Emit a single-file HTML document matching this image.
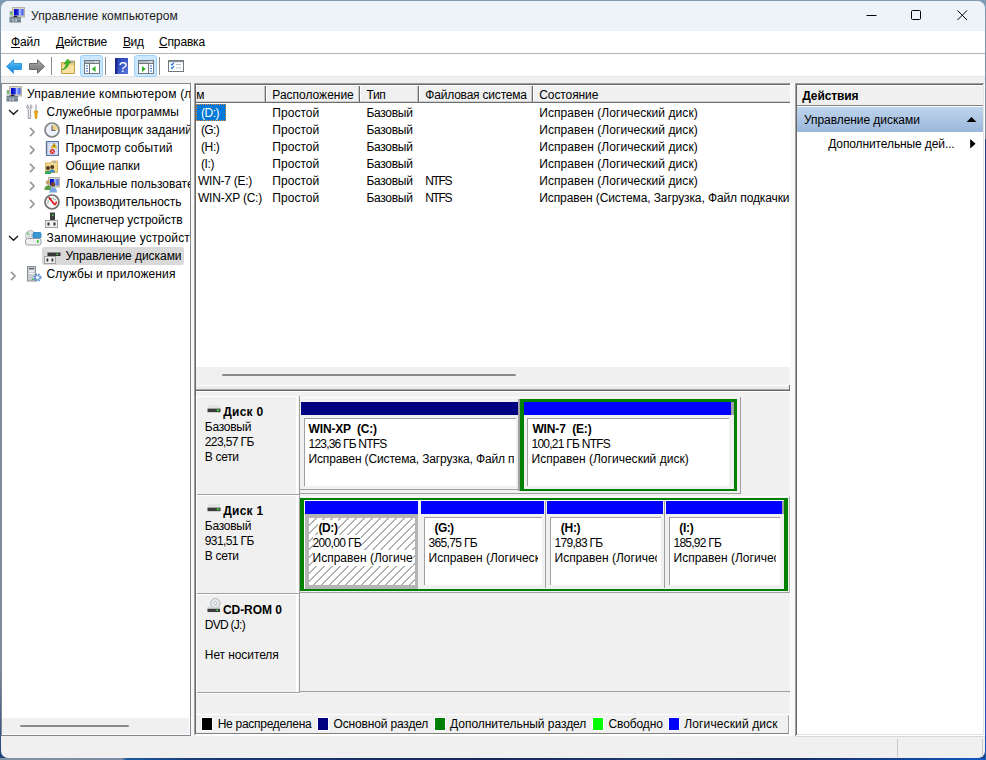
<!DOCTYPE html>
<html lang="ru"><head><meta charset="utf-8"><title>Управление компьютером</title>
<style>
html,body{margin:0;padding:0;}
body{width:986px;height:760px;overflow:hidden;background:#1b3f7a;font-family:"Liberation Sans", sans-serif;font-size:12px;color:#000;}
#w{position:absolute;left:0;top:0;width:986px;height:760px;overflow:hidden;}
#w div,#w span.t,#w svg{position:absolute;}
span.t{white-space:pre;line-height:16px;height:16px;}
u{text-decoration:underline;text-underline-offset:1px;text-decoration-skip-ink:none;}
</style></head><body><div id="w">
<div style="left:0;top:0;width:986px;height:760px;background:linear-gradient(180deg,#7f9bb3 0%,#7b8c9e 12%,#7b8c9e 88%,#1d3f78 100%);"></div>
<div style="left:985px;top:0;width:1px;height:760px;background:linear-gradient(180deg,#7f9bb3 0,#7a8ca2 18.2%,#1c3c88 18.4%,#1a3a80 70%,#1058c0 100%);"></div>
<div style="left:0;top:758px;width:986px;height:2px;background:linear-gradient(90deg,#8090a6 0,#7c8ca4 12.4%,#1c5c98 12.8%,#1a3a78 20%,#182858 50%,#203c70 65%,#182c60 80%,#1058c0 100%);"></div>
<div style="left:1px;top:1px;width:984px;height:757px;background:#f0f0f0;border-radius:8px 8px 7px 7px;overflow:hidden;">
</div>
<div style="left:1px;top:1px;width:984px;height:30px;background:#eef3f9;border-radius:8px 8px 0 0;"></div>
<div style="left:1px;top:31px;width:984px;height:45px;background:#fff;"></div>
<div style="left:1px;top:53px;width:984px;height:1px;background:#b4b4b4;"></div>
<div style="left:1px;top:76px;width:984px;height:1px;background:#e3e3e3;"></div>
<svg style="left:9px;top:7px" width="17" height="16" viewBox="0 0 17 16"><rect x="3.5" y="0.5" width="12" height="9.5" fill="#d8d4c4" stroke="#b8b4a4" stroke-width="1"/><defs><linearGradient id="scr" x1="0" y1="0" x2="1" y2="0"><stop offset="0" stop-color="#0000c8"/><stop offset="0.45" stop-color="#2030d8"/><stop offset="0.55" stop-color="#b8c8ff"/><stop offset="1" stop-color="#2848e8"/></linearGradient></defs><rect x="5" y="2" width="9.5" height="6.5" fill="url(#scr)"/><rect x="0.5" y="4" width="2.5" height="6" fill="#c8c8d0"/><rect x="1" y="6" width="2" height="1.5" fill="#30e030"/><rect x="1.5" y="4.5" width="1" height="1.2" fill="#404050"/><path d="M4 10 Q6.5 7.5 9 10 Z" fill="#202020"/><rect x="0.5" y="10" width="11.5" height="5.5" fill="#70808c"/><rect x="0.5" y="11.5" width="11.5" height="1" fill="#9aa8b2"/><rect x="3.5" y="12.5" width="1.2" height="2" fill="#e8e8f0"/><rect x="6.5" y="12.5" width="1.2" height="2" fill="#e8e8f0"/></svg>
<span class="t" id="t0" style="left:31px;top:8px;color:#1a1a1a;letter-spacing:0.055px;">Управление компьютером</span>
<svg style="left:860px;top:1px" width="124" height="30" viewBox="0 0 124 30" fill="none" stroke="#000" stroke-width="1"><path d="M6.5 14.5 H16.5"/><rect x="51.5" y="9.5" width="9" height="9" rx="1"/><path d="M97.5 9.5 L107 19 M107 9.5 L97.5 19"/></svg>
<span class="t" id="t1" style="left:11px;top:34px;letter-spacing:-0.179px;"><u>Ф</u>айл</span>
<span class="t" id="t2" style="left:56px;top:34px;letter-spacing:-0.221px;"><u>Д</u>ействие</span>
<span class="t" id="t3" style="left:123px;top:34px;letter-spacing:-0.411px;"><u>В</u>ид</span>
<span class="t" id="t4" style="left:159px;top:34px;letter-spacing:-0.156px;"><u>С</u>правка</span>
<svg style="left:5px;top:58px" width="18" height="17" viewBox="0 0 18 17"><defs><linearGradient id="ba" x1="0" y1="0" x2="0" y2="1"><stop offset="0" stop-color="#7fd0f8"/><stop offset="0.5" stop-color="#2ea0e8"/><stop offset="1" stop-color="#1c7fd0"/></linearGradient><linearGradient id="fa" x1="0" y1="0" x2="0" y2="1"><stop offset="0" stop-color="#b8b8b8"/><stop offset="0.5" stop-color="#8c8c8c"/><stop offset="1" stop-color="#787878"/></linearGradient></defs><path d="M1.5 8.5 L8.5 1.8 V5.5 H16.5 V11.5 H8.5 V15.2 Z" fill="url(#ba)" stroke="#3a9be0" stroke-width="1" stroke-linejoin="round"/></svg>
<svg style="left:28px;top:58px" width="18" height="17" viewBox="0 0 18 17"><path d="M16.5 8.5 L9.5 1.8 V5.5 H1.5 V11.5 H9.5 V15.2 Z" fill="url(#fa)" stroke="#6a6a6a" stroke-width="1" stroke-linejoin="round"/></svg>
<div style="left:51px;top:57px;width:1px;height:18px;background:#8a8a8a;"></div>
<div style="left:105px;top:57px;width:1px;height:18px;background:#8a8a8a;"></div>
<div style="left:159px;top:57px;width:1px;height:18px;background:#8a8a8a;"></div>
<svg style="left:60px;top:58px" width="16" height="17" viewBox="0 0 16 17"><path d="M1.5 4.5 H8 L9 3 H14.5 V15.5 H1.5 Z" fill="#ecc878" stroke="#c8a048" stroke-width="1"/><rect x="2" y="7" width="12" height="8" fill="#f6e0a0"/><rect x="10.5" y="3.4" width="3" height="1.2" fill="#5a9cf0"/><path d="M1.8 11.8 C4.6 10.6 6 8.2 6.2 5.4 L4.2 5.8 L7.6 1 L10.8 5 L8.8 5 C8.6 8.6 6.2 11.2 1.8 11.8 Z" fill="#3cb828" stroke="#2a9818" stroke-width="0.6"/></svg>
<div style="left:80px;top:55px;width:23px;height:22px;background:#cce8ff;border:1px solid #99d1ff;border-radius:3px;box-sizing:border-box;"></div>
<div style="left:134px;top:55px;width:23px;height:22px;background:#cce8ff;border:1px solid #99d1ff;border-radius:3px;box-sizing:border-box;"></div>
<svg style="left:84px;top:60px" width="16" height="14" viewBox="0 0 16 14"><rect x="0.5" y="0.5" width="15" height="13" fill="#fff" stroke="#707880"/><rect x="1" y="1" width="14" height="2" fill="#b8bcc4"/><rect x="1" y="3" width="14" height="1" fill="#707880"/><rect x="11" y="1.3" width="1.2" height="1.2" fill="#fff"/><rect x="13" y="1.3" width="1.2" height="1.2" fill="#fff"/><rect x="5" y="4" width="1" height="9" fill="#707880"/><rect x="2" y="5.5" width="2" height="1" fill="#3a70d8"/><rect x="2" y="8" width="2" height="1" fill="#3a70d8"/><rect x="2" y="10.5" width="2" height="1" fill="#3a70d8"/><path d="M11.5 6 V12 L7.8 9 Z" fill="#2cb020"/></svg>
<svg style="left:115px;top:58px" width="13" height="16" viewBox="0 0 13 16"><defs><linearGradient id="hb" x1="0" y1="0" x2="1" y2="1"><stop offset="0" stop-color="#2038b0"/><stop offset="1" stop-color="#5878e0"/></linearGradient></defs><rect x="0" y="0" width="13" height="16" fill="url(#hb)"/><rect x="0" y="0" width="2.5" height="16" fill="#1a2c90"/><text x="7.8" y="13.6" font-family="Liberation Sans, sans-serif" font-size="15" fill="#fff" text-anchor="middle">?</text></svg>
<svg style="left:138px;top:60px" width="16" height="14" viewBox="0 0 16 14"><rect x="0.5" y="0.5" width="15" height="13" fill="#fff" stroke="#707880"/><rect x="1" y="1" width="14" height="2" fill="#b8bcc4"/><rect x="1" y="3" width="14" height="1" fill="#707880"/><rect x="11" y="1.3" width="1.2" height="1.2" fill="#fff"/><rect x="13" y="1.3" width="1.2" height="1.2" fill="#fff"/><rect x="10" y="4" width="1" height="9" fill="#707880"/><rect x="12" y="5.5" width="2" height="1" fill="#3a70d8"/><rect x="12" y="8" width="2" height="1" fill="#3a70d8"/><rect x="12" y="10.5" width="2" height="1" fill="#3a70d8"/><path d="M4 6 V12 L7.7 9 Z" fill="#2cb020"/></svg>
<svg style="left:168px;top:60px" width="16" height="12" viewBox="0 0 16 12"><rect x="0.5" y="0.5" width="15" height="11" fill="#fff" stroke="#707880"/><rect x="1" y="1" width="14" height="1.2" fill="#8a9098"/><path d="M3 3.8 L4 5 L6 2.6 M3 7.3 L4 8.5 L6 6.1" fill="none" stroke="#2a78e0" stroke-width="1.2"/><rect x="8" y="4" width="5" height="0.8" fill="#b0b0b0"/><rect x="8" y="7.5" width="5" height="0.8" fill="#b0b0b0"/></svg>
<div style="left:1px;top:83px;width:190px;height:653px;background:#fff;border:1px solid #828790;box-sizing:border-box;"></div>
<div style="left:2px;top:718px;width:187px;height:16px;background:#f0f0f0;"></div>
<div style="left:20px;top:725px;width:109px;height:2px;background:#8a8a8a;border-radius:1px;"></div>
<div style="left:42px;top:247px;width:142px;height:18px;background:#d9d9d9;border-radius:2px;"></div>
<svg style="left:6px;top:86px" width="17" height="16" viewBox="0 0 17 16"><rect x="3.5" y="0.5" width="12" height="9.5" fill="#d8d4c4" stroke="#b8b4a4" stroke-width="1"/><defs><linearGradient id="scr" x1="0" y1="0" x2="1" y2="0"><stop offset="0" stop-color="#0000c8"/><stop offset="0.45" stop-color="#2030d8"/><stop offset="0.55" stop-color="#b8c8ff"/><stop offset="1" stop-color="#2848e8"/></linearGradient></defs><rect x="5" y="2" width="9.5" height="6.5" fill="url(#scr)"/><rect x="0.5" y="4" width="2.5" height="6" fill="#c8c8d0"/><rect x="1" y="6" width="2" height="1.5" fill="#30e030"/><rect x="1.5" y="4.5" width="1" height="1.2" fill="#404050"/><path d="M4 10 Q6.5 7.5 9 10 Z" fill="#202020"/><rect x="0.5" y="10" width="11.5" height="5.5" fill="#70808c"/><rect x="0.5" y="11.5" width="11.5" height="1" fill="#9aa8b2"/><rect x="3.5" y="12.5" width="1.2" height="2" fill="#e8e8f0"/><rect x="6.5" y="12.5" width="1.2" height="2" fill="#e8e8f0"/></svg>
<span class="t" id="t5" style="left:27px;top:86px;letter-spacing:0.188px;width:163px;overflow:hidden;">Управление компьютером (л</span>
<svg style="left:8px;top:109.4px" width="11" height="7" viewBox="0 0 11 7"><path d="M1 1 L5.5 5.3 L10 1" fill="none" stroke="#1a1a1a" stroke-width="1.4"/></svg>
<svg style="left:26px;top:104px" width="14" height="16" viewBox="0 0 14 16"><path d="M2 0.8 C0.6 1.6 0.4 3.6 1.6 4.8 L2.2 5.4 V14.5 H4.6 V5.4 L5.2 4.8 C6.4 3.6 6.2 1.6 4.8 0.8 V3.2 L3.4 4 L2 3.2 Z" fill="#e8e8ec" stroke="#8a8c94" stroke-width="0.8"/><rect x="9.5" y="0.5" width="1" height="6.5" fill="#9098a0"/><path d="M8.3 7 H11.7 V9 L11 9.6 V14 Q10 15.4 9 14 V9.6 L8.3 9 Z" fill="#f0b010" stroke="#c88a00" stroke-width="0.6"/></svg>
<span class="t" id="t6" style="left:46.5px;top:104px;letter-spacing:0.068px;">Служебные программы</span>
<svg style="left:29.2px;top:127px" width="7" height="10" viewBox="0 0 7 10"><path d="M1 0.9 L5.1 5 L1 9.1" fill="none" stroke="#929292" stroke-width="1.5"/></svg>
<svg style="left:29.2px;top:145px" width="7" height="10" viewBox="0 0 7 10"><path d="M1 0.9 L5.1 5 L1 9.1" fill="none" stroke="#929292" stroke-width="1.5"/></svg>
<svg style="left:29.2px;top:163px" width="7" height="10" viewBox="0 0 7 10"><path d="M1 0.9 L5.1 5 L1 9.1" fill="none" stroke="#929292" stroke-width="1.5"/></svg>
<svg style="left:29.2px;top:181px" width="7" height="10" viewBox="0 0 7 10"><path d="M1 0.9 L5.1 5 L1 9.1" fill="none" stroke="#929292" stroke-width="1.5"/></svg>
<svg style="left:29.2px;top:199px" width="7" height="10" viewBox="0 0 7 10"><path d="M1 0.9 L5.1 5 L1 9.1" fill="none" stroke="#929292" stroke-width="1.5"/></svg>
<svg style="left:44px;top:122px" width="16" height="16" viewBox="0 0 16 16"><circle cx="8" cy="8" r="7" fill="#eef2f8" stroke="#808488" stroke-width="1.7"/><path d="M8 8 V2.2 A5.8 5.8 0 0 1 13.8 8 Z" fill="#f0d088"/><path d="M8 3.5 V8.5 H11.5" fill="none" stroke="#5a6470" stroke-width="1.1"/></svg>
<span class="t" id="t7" style="left:65.5px;top:122px;width:124.5px;overflow:hidden;">Планировщик заданий</span>
<svg style="left:45px;top:141px" width="14" height="15" viewBox="0 0 14 15"><rect x="1.5" y="0.5" width="12" height="14" fill="#c8d8f4" stroke="#5870a8" stroke-width="1"/><path d="M3 3.5 H13 M3 5.5 H13 M3 7.5 H13 M3 9.5 H13 M3 11.5 H13" stroke="#eaf0fc" stroke-width="0.8"/><path d="M0.5 2 H2.5 M0.5 4 H2.5 M0.5 6 H2.5 M0.5 8 H2.5 M0.5 10 H2.5 M0.5 12 H2.5" stroke="#707478" stroke-width="0.8"/><path d="M9 2 L12 7 H6 Z" fill="#f8d020" stroke="#b89000" stroke-width="0.5"/><rect x="8.6" y="3.8" width="0.9" height="2" fill="#202020"/><circle cx="7.3" cy="10.5" r="2.5" fill="#e02828"/><path d="M6.3 9.5 L8.3 11.5 M8.3 9.5 L6.3 11.5" stroke="#fff" stroke-width="0.8"/></svg>
<span class="t" id="t8" style="left:65.5px;top:140px;letter-spacing:0.103px;">Просмотр событий</span>
<svg style="left:44px;top:160px" width="15" height="15" viewBox="0 0 15 15"><path d="M1.5 3 H7 L8 1 H13.5 V12.5 H1.5 Z" fill="#f4d88c" stroke="#d0a848" stroke-width="0.8"/><rect x="9" y="1.6" width="3" height="1" fill="#6aa0e8"/><circle cx="4" cy="8" r="2" fill="#503828"/><path d="M0.8 14 Q0.8 10.5 4 10.5 Q7.2 10.5 7.2 14 Z" fill="#38a858"/><circle cx="8.2" cy="7" r="2" fill="#503828"/><path d="M5.4 12.6 Q5.4 9.5 8.2 9.5 Q11 9.5 11 12.6 Z" fill="#3888c8"/></svg>
<span class="t" id="t9" style="left:65.5px;top:158px;letter-spacing:0.007px;">Общие папки</span>
<svg style="left:44px;top:176.5px" width="16" height="16" viewBox="0 0 16 16"><rect x="4.5" y="0.5" width="11" height="9.5" fill="#d8d4c4" stroke="#b8b4a4"/><rect x="6" y="2" width="8.5" height="6.5" fill="url(#scr)"/><circle cx="4" cy="5.5" r="2.2" fill="#c8a070"/><path d="M0.4 13 Q0.4 8.5 4 8.5 Q7.6 8.5 7.6 13 Z" fill="#58a048"/><circle cx="9" cy="7.5" r="2.3" fill="#704828"/><path d="M5.4 15.5 Q5.4 10.5 9 10.5 Q13 10.5 13 15.5 Z" fill="#78a8e0"/></svg>
<span class="t" id="t10" style="left:65.5px;top:176px;width:124.5px;overflow:hidden;">Локальные пользовате</span>
<svg style="left:44px;top:194px" width="16" height="16" viewBox="0 0 16 16"><circle cx="8" cy="8" r="7" fill="#fbfbfb" stroke="#707070" stroke-width="1.7"/><path d="M4 9.5 A4.2 4.2 0 0 1 12 7" fill="none" stroke="#508060" stroke-width="1.2" stroke-dasharray="1 1"/><path d="M12.5 7.5 A4.5 4.5 0 0 1 10.5 11" fill="none" stroke="#e01818" stroke-width="1.6"/><path d="M4.8 3.2 L10.5 10.5" stroke="#e01020" stroke-width="1.8"/></svg>
<span class="t" id="t11" style="left:65.5px;top:194px;letter-spacing:-0.027px;">Производительность</span>
<svg style="left:45px;top:212px" width="13" height="16" viewBox="0 0 13 16"><rect x="5" y="0.5" width="5" height="8" fill="#404040"/><rect x="7" y="2.5" width="1.5" height="1.5" fill="#40e040"/><rect x="0.5" y="8.5" width="12" height="7" fill="#f0f0f0" stroke="#a0a0a0"/><rect x="2.5" y="10.5" width="2" height="3" fill="#303030"/><rect x="8.5" y="10.5" width="2" height="3" fill="#303030"/></svg>
<span class="t" id="t12" style="left:65.5px;top:212px;letter-spacing:-0.017px;">Диспетчер устройств</span>
<svg style="left:8px;top:235.4px" width="11" height="7" viewBox="0 0 11 7"><path d="M1 1 L5.5 5.3 L10 1" fill="none" stroke="#1a1a1a" stroke-width="1.4"/></svg>
<svg style="left:25px;top:230px" width="17" height="16" viewBox="0 0 17 16"><circle cx="5.5" cy="5.5" r="5" fill="#e4e6ea" stroke="#a8acb0" stroke-width="0.8"/><circle cx="5.5" cy="5.5" r="1.3" fill="#fff" stroke="#909498" stroke-width="0.6"/><rect x="2" y="2.5" width="1.5" height="2" fill="#40c040"/><rect x="8" y="2.5" width="8" height="5.5" rx="1" fill="#3898d8" stroke="#2878b8" stroke-width="0.8"/><rect x="0.5" y="8.5" width="15.5" height="6.5" rx="2" fill="#f0f0f2" stroke="#909498" stroke-width="0.9"/><rect x="12" y="10" width="1.6" height="3" fill="#38c838"/></svg>
<span class="t" id="t13" style="left:46.5px;top:230px;letter-spacing:0.174px;width:143.5px;overflow:hidden;">Запоминающие устройст</span>
<svg style="left:44px;top:249px" width="17" height="15" viewBox="0 0 17 15"><rect x="4" y="0.5" width="12" height="3" fill="#e0e2e6"/><rect x="3.5" y="3.5" width="13" height="3.5" fill="#383838"/><rect x="12.5" y="4.5" width="1.5" height="1.5" fill="#40e040"/><rect x="0.5" y="7.5" width="11" height="7" fill="#f0f0f0" stroke="#a0a0a0"/><rect x="2.5" y="9.5" width="1.8" height="3" fill="#303030"/><rect x="7.5" y="9.5" width="1.8" height="3" fill="#303030"/></svg>
<span class="t" id="t14" style="left:65.5px;top:248px;letter-spacing:-0.049px;">Управление дисками</span>
<svg style="left:10.2px;top:271px" width="7" height="10" viewBox="0 0 7 10"><path d="M1 0.9 L5.1 5 L1 9.1" fill="none" stroke="#929292" stroke-width="1.5"/></svg>
<svg style="left:27px;top:266px" width="15" height="16" viewBox="0 0 15 16"><rect x="0.5" y="0.5" width="8" height="14.5" fill="#c8ccd2" stroke="#8a9098"/><rect x="2" y="2" width="5" height="1.2" fill="#585c64"/><rect x="2" y="4.5" width="5" height="1.2" fill="#fff"/><rect x="2" y="7" width="5" height="1" fill="#fff"/><rect x="5" y="12.5" width="1.6" height="1.4" fill="#38c838"/><circle cx="10.5" cy="11.5" r="3" fill="none" stroke="#5890d0" stroke-width="2.2" stroke-dasharray="1.4 1"/><circle cx="10.5" cy="11.5" r="2.2" fill="#e8f0fc" stroke="#5890d0" stroke-width="0.9"/></svg>
<span class="t" id="t15" style="left:46.5px;top:266px;letter-spacing:0.109px;">Службы и приложения</span>
<div style="left:191px;top:83px;width:3px;height:653px;background:#f8f8f8;"></div>
<div style="left:791px;top:83px;width:4px;height:653px;background:#f8f8f8;"></div>
<div style="left:194px;top:83px;width:597px;height:653px;background:#f0f0f0;"></div>
<div style="left:194px;top:83px;width:597px;height:1px;background:#a0a0a0;"></div>
<div style="left:194px;top:83px;width:1px;height:652px;background:#a0a0a0;"></div>
<div style="left:195px;top:84px;width:595px;height:1px;background:#696969;"></div>
<div style="left:195px;top:84px;width:1px;height:650px;background:#696969;"></div>
<div style="left:790px;top:83px;width:1px;height:653px;background:#fff;"></div>
<div style="left:196px;top:85px;width:594px;height:282px;background:#fff;"></div>
<div style="left:196px;top:85px;width:594px;height:18px;background:#f0f0f0;"></div>
<div style="left:196px;top:85px;width:594px;height:1px;background:#fff;"></div>
<div style="left:196px;top:101px;width:594px;height:1px;background:#d0d0d0;"></div>
<div style="left:196px;top:102px;width:594px;height:1px;background:#6e6e6e;"></div>
<div style="left:264px;top:86px;width:1px;height:15px;background:#c4c4c4;"></div>
<div style="left:265px;top:86px;width:1px;height:16px;background:#6e6e6e;"></div>
<div style="left:266px;top:86px;width:1px;height:15px;background:#fff;"></div>
<div style="left:358px;top:86px;width:1px;height:15px;background:#c4c4c4;"></div>
<div style="left:359px;top:86px;width:1px;height:16px;background:#6e6e6e;"></div>
<div style="left:360px;top:86px;width:1px;height:15px;background:#fff;"></div>
<div style="left:417px;top:86px;width:1px;height:15px;background:#c4c4c4;"></div>
<div style="left:418px;top:86px;width:1px;height:16px;background:#6e6e6e;"></div>
<div style="left:419px;top:86px;width:1px;height:15px;background:#fff;"></div>
<div style="left:531px;top:86px;width:1px;height:15px;background:#c4c4c4;"></div>
<div style="left:532px;top:86px;width:1px;height:16px;background:#6e6e6e;"></div>
<div style="left:533px;top:86px;width:1px;height:15px;background:#fff;"></div>
<span class="t" id="t16" style="left:189.6px;top:87px;clip-path:inset(0 0 0 6.4px);">ом</span>
<span class="t" id="t17" style="left:272.3px;top:87px;letter-spacing:-0.007px;">Расположение</span>
<span class="t" id="t18" style="left:366.4px;top:87px;letter-spacing:-0.272px;">Тип</span>
<span class="t" id="t19" style="left:425.3px;top:87px;letter-spacing:-0.201px;">Файловая система</span>
<span class="t" id="t20" style="left:539.3px;top:87px;letter-spacing:-0.099px;">Состояние</span>
<div style="left:196px;top:104px;width:30px;height:17px;background:#0078d7;outline:1px dotted #e08a3c;outline-offset:-1px;"></div>
<span class="t" id="t21" style="left:201px;top:104.5px;color:#fff;letter-spacing:-0.500px;">(D:)</span>
<span class="t" id="t22" style="left:272.3px;top:104.5px;letter-spacing:0.040px;">Простой</span>
<span class="t" id="t23" style="left:366.4px;top:104.5px;letter-spacing:-0.282px;">Базовый</span>
<span class="t" id="t24" style="left:539.3px;top:104.5px;letter-spacing:0.064px;">Исправен (Логический диск)</span>
<span class="t" id="t25" style="left:201px;top:121.5px;letter-spacing:-0.668px;">(G:)</span>
<span class="t" id="t26" style="left:272.3px;top:121.5px;letter-spacing:0.040px;">Простой</span>
<span class="t" id="t27" style="left:366.4px;top:121.5px;letter-spacing:-0.282px;">Базовый</span>
<span class="t" id="t28" style="left:539.3px;top:121.5px;letter-spacing:0.064px;">Исправен (Логический диск)</span>
<span class="t" id="t29" style="left:201px;top:138.5px;letter-spacing:-0.375px;">(H:)</span>
<span class="t" id="t30" style="left:272.3px;top:138.5px;letter-spacing:0.040px;">Простой</span>
<span class="t" id="t31" style="left:366.4px;top:138.5px;letter-spacing:-0.282px;">Базовый</span>
<span class="t" id="t32" style="left:539.3px;top:138.5px;letter-spacing:0.064px;">Исправен (Логический диск)</span>
<span class="t" id="t33" style="left:201px;top:155.5px;letter-spacing:-0.418px;">(I:)</span>
<span class="t" id="t34" style="left:272.3px;top:155.5px;letter-spacing:0.040px;">Простой</span>
<span class="t" id="t35" style="left:366.4px;top:155.5px;letter-spacing:-0.282px;">Базовый</span>
<span class="t" id="t36" style="left:539.3px;top:155.5px;letter-spacing:0.064px;">Исправен (Логический диск)</span>
<span class="t" id="t37" style="left:198px;top:172.5px;letter-spacing:-0.267px;">WIN-7 (E:)</span>
<span class="t" id="t38" style="left:272.3px;top:172.5px;letter-spacing:0.040px;">Простой</span>
<span class="t" id="t39" style="left:366.4px;top:172.5px;letter-spacing:-0.282px;">Базовый</span>
<span class="t" id="t40" style="left:425.3px;top:172.5px;letter-spacing:-1.386px;">NTFS</span>
<span class="t" id="t41" style="left:539.3px;top:172.5px;letter-spacing:0.064px;">Исправен (Логический диск)</span>
<span class="t" id="t42" style="left:198px;top:189.5px;letter-spacing:-0.223px;">WIN-XP (C:)</span>
<span class="t" id="t43" style="left:272.3px;top:189.5px;letter-spacing:0.040px;">Простой</span>
<span class="t" id="t44" style="left:366.4px;top:189.5px;letter-spacing:-0.282px;">Базовый</span>
<span class="t" id="t45" style="left:425.3px;top:189.5px;letter-spacing:-1.386px;">NTFS</span>
<span class="t" id="t46" style="left:539.3px;top:189.5px;letter-spacing:-0.101px;width:250.5px;overflow:hidden;">Исправен (Система, Загрузка, Файл подкачки</span>
<div style="left:196px;top:367px;width:594px;height:18px;background:#f0f0f0;"></div>
<div style="left:222px;top:374px;width:294px;height:2px;background:#8a8a8a;border-radius:1px;"></div>
<div style="left:196px;top:385px;width:594px;height:1px;background:#fff;"></div>
<div style="left:196px;top:386px;width:594px;height:3px;background:#ececec;"></div>
<div style="left:196px;top:389px;width:594px;height:1px;background:#a8a8a8;"></div>
<div style="left:196px;top:390px;width:594px;height:1px;background:#696969;"></div>
<div style="left:196px;top:391px;width:594px;height:1px;background:#fff;"></div>
<div style="left:789px;top:385px;width:1px;height:6px;background:#696969;"></div>
<div style="left:196px;top:396px;width:1px;height:99px;background:#fff;"></div>
<div style="left:196px;top:396px;width:101px;height:1px;background:#fff;"></div>
<div style="left:296px;top:396px;width:2px;height:98px;background:#fff;"></div>
<div style="left:299px;top:396px;width:1px;height:98px;background:#a0a0a0;"></div>
<div style="left:197px;top:494px;width:103px;height:1px;background:#a0a0a0;"></div>
<div style="left:197px;top:495px;width:103px;height:1px;background:#fff;"></div>
<svg style="left:207px;top:405px" width="14" height="8" viewBox="0 0 14 8"><path d="M1.5 0 H12.5 L13.5 3.6 H0.5 Z" fill="#e2e4e8"/><rect x="0.5" y="3.6" width="13" height="3.4" fill="#3a3a3a"/><rect x="9.6" y="4.7" width="2.6" height="1" fill="#40e040"/><rect x="10.4" y="4" width="1" height="2.4" fill="#40e040"/><rect x="0.5" y="7" width="13" height="0.8" fill="#c8c8c8"/></svg>
<span class="t" id="t47" style="left:223.3px;top:403.5px;font-weight:bold;letter-spacing:0.229px;">Диск 0</span>
<span class="t" id="t48" style="left:204.8px;top:418.5px;letter-spacing:-0.253px;">Базовый</span>
<span class="t" id="t49" style="left:204.8px;top:433.5px;letter-spacing:-0.602px;">223,57 ГБ</span>
<span class="t" id="t50" style="left:204.8px;top:448.5px;letter-spacing:-0.319px;">В сети</span>
<div style="left:196px;top:495px;width:1px;height:99px;background:#fff;"></div>
<div style="left:196px;top:495px;width:101px;height:1px;background:#fff;"></div>
<div style="left:296px;top:495px;width:2px;height:98px;background:#fff;"></div>
<div style="left:299px;top:495px;width:1px;height:98px;background:#a0a0a0;"></div>
<div style="left:197px;top:593px;width:103px;height:1px;background:#a0a0a0;"></div>
<div style="left:197px;top:594px;width:103px;height:1px;background:#fff;"></div>
<svg style="left:207px;top:504px" width="14" height="8" viewBox="0 0 14 8"><path d="M1.5 0 H12.5 L13.5 3.6 H0.5 Z" fill="#e2e4e8"/><rect x="0.5" y="3.6" width="13" height="3.4" fill="#3a3a3a"/><rect x="9.6" y="4.7" width="2.6" height="1" fill="#40e040"/><rect x="10.4" y="4" width="1" height="2.4" fill="#40e040"/><rect x="0.5" y="7" width="13" height="0.8" fill="#c8c8c8"/></svg>
<span class="t" id="t51" style="left:223.3px;top:502.5px;font-weight:bold;letter-spacing:0.229px;">Диск 1</span>
<span class="t" id="t52" style="left:204.8px;top:517.5px;letter-spacing:-0.253px;">Базовый</span>
<span class="t" id="t53" style="left:204.8px;top:532.5px;letter-spacing:-0.602px;">931,51 ГБ</span>
<span class="t" id="t54" style="left:204.8px;top:547.5px;letter-spacing:-0.319px;">В сети</span>
<div style="left:196px;top:594px;width:1px;height:99px;background:#fff;"></div>
<div style="left:196px;top:594px;width:101px;height:1px;background:#fff;"></div>
<div style="left:296px;top:594px;width:2px;height:98px;background:#fff;"></div>
<div style="left:299px;top:594px;width:1px;height:98px;background:#a0a0a0;"></div>
<div style="left:197px;top:692px;width:103px;height:1px;background:#a0a0a0;"></div>
<div style="left:197px;top:693px;width:103px;height:1px;background:#fff;"></div>
<svg style="left:207px;top:597.5px" width="14" height="15" viewBox="0 0 15 16"><circle cx="9" cy="5.5" r="5" fill="#e8eaee" stroke="#a4a8ac" stroke-width="0.9"/><circle cx="9" cy="5.5" r="1.6" fill="#fff" stroke="#9a9ea2" stroke-width="0.7"/><rect x="0.5" y="9" width="13.5" height="2.5" fill="#d4d6da"/><rect x="0.5" y="11.5" width="13.5" height="3.5" fill="#3c3c3c"/><rect x="10" y="12.4" width="1.8" height="1.5" fill="#40e040"/></svg>
<span class="t" id="t55" style="left:223px;top:601.5px;font-weight:bold;letter-spacing:-0.068px;">CD-ROM 0</span>
<span class="t" id="t56" style="left:204.8px;top:616.5px;letter-spacing:-0.725px;">DVD (J:)</span>
<span class="t" id="t57" style="left:204.8px;top:646.5px;letter-spacing:-0.085px;">Нет носителя</span>
<div style="left:300px;top:489px;width:219px;height:1px;background:#a0a0a0;"></div>
<div style="left:300px;top:397px;width:440px;height:1px;background:#fff;"></div>
<div style="left:300px;top:493px;width:441px;height:1px;background:#a0a0a0;"></div>
<div style="left:740px;top:397px;width:1px;height:97px;background:#a0a0a0;"></div>
<div style="left:301px;top:402px;width:217px;height:13px;background:#000080;"></div>
<div style="left:304px;top:418px;width:212px;height:68px;background:#fff;border-left:1px solid #a0a0a0;border-top:1px solid #a0a0a0;box-sizing:border-box;"></div>
<span class="t" id="t58" style="left:308.6px;top:420.5px;font-weight:bold;letter-spacing:-0.178px;">WIN-XP  (C:)</span>
<span class="t" id="t59" style="left:308.5px;top:435.5px;letter-spacing:-0.791px;">123,36 ГБ NTFS</span>
<span class="t" id="t60" style="left:308.5px;top:451px;letter-spacing:-0.141px;width:205.0px;overflow:hidden;">Исправен (Система, Загрузка, Файл подкачки</span>
<div style="left:518px;top:399px;width:2px;height:92px;background:#a0a0a0;"></div>
<div style="left:520px;top:399px;width:217px;height:92px;border:solid #008000;border-width:3px 3px 2px 4px;box-sizing:border-box;"></div>
<div style="left:731px;top:402px;width:3px;height:13px;background:#a0a0a0;"></div>
<div style="left:524px;top:402px;width:207px;height:13px;background:#0000ff;"></div>
<div style="left:527px;top:418px;width:202px;height:68px;background:#fff;border-left:1px solid #a0a0a0;border-top:1px solid #a0a0a0;box-sizing:border-box;"></div>
<span class="t" id="t61" style="left:532.4px;top:420.5px;font-weight:bold;letter-spacing:-0.132px;">WIN-7  (E:)</span>
<span class="t" id="t62" style="left:531.5px;top:435.5px;letter-spacing:-0.748px;">100,21 ГБ NTFS</span>
<span class="t" id="t63" style="left:531.5px;top:451px;letter-spacing:0.014px;width:196.5px;overflow:hidden;">Исправен (Логический диск)</span>
<div style="left:300px;top:592px;width:490px;height:1px;background:#a0a0a0;"></div>
<div style="left:300px;top:496px;width:490px;height:1px;background:#fff;"></div>
<div style="left:789px;top:496px;width:1px;height:97px;background:#b8b8b8;"></div>
<div style="left:300px;top:498px;width:488px;height:93px;border:solid #008000;border-width:2px 4px 2px 4px;box-sizing:border-box;"></div>
<div style="left:304px;top:500px;width:480px;height:1px;background:#fff;"></div>
<div style="left:304px;top:500px;width:1px;height:88px;background:#fff;"></div>
<div style="left:782px;top:501px;width:2px;height:13px;background:#a0a0a0;"></div>
<div style="left:305px;top:501px;width:113px;height:13px;background:#0000ff;"></div>
<div style="left:305px;top:514px;width:113px;height:75px;background:#b4b4b4;"></div>
<div style="left:309px;top:518px;width:106px;height:67px;background:repeating-linear-gradient(135deg,#fff 0,#fff 4.8px,#b0b0b0 4.8px,#b0b0b0 5.657px);"></div>
<span class="t" id="t64" style="left:318.4px;top:519.5px;font-weight:bold;letter-spacing:-0.339px;background:#fff;">(D:)</span>
<span class="t" id="t65" style="left:312.5px;top:534.5px;letter-spacing:-0.658px;background:#fff;">200,00 ГБ</span>
<span class="t" id="t66" style="left:312.5px;top:550px;letter-spacing:0.014px;width:100.0px;overflow:hidden;background:#fff;">Исправен (Логический диск)</span>
<div style="left:421px;top:501px;width:123px;height:13px;background:#0000ff;"></div>
<div style="left:424px;top:517px;width:118px;height:68px;background:#fff;border-left:1px solid #a0a0a0;border-top:1px solid #a0a0a0;box-sizing:border-box;"></div>
<span class="t" id="t67" style="left:434.5px;top:519.5px;font-weight:bold;letter-spacing:-0.582px;">(G:)</span>
<span class="t" id="t68" style="left:428.5px;top:534.5px;letter-spacing:-0.658px;">365,75 ГБ</span>
<span class="t" id="t69" style="left:428.5px;top:550px;letter-spacing:0.014px;width:109.10000000000002px;overflow:hidden;">Исправен (Логический диск)</span>
<div style="left:545px;top:501px;width:1px;height:87px;background:#a0a0a0;"></div>
<div style="left:547px;top:501px;width:116px;height:13px;background:#0000ff;"></div>
<div style="left:550px;top:517px;width:111px;height:68px;background:#fff;border-left:1px solid #a0a0a0;border-top:1px solid #a0a0a0;box-sizing:border-box;"></div>
<span class="t" id="t70" style="left:560.8px;top:519.5px;font-weight:bold;letter-spacing:-0.289px;">(H:)</span>
<span class="t" id="t71" style="left:554.5px;top:534.5px;letter-spacing:-0.714px;">179,83 ГБ</span>
<span class="t" id="t72" style="left:554.5px;top:550px;letter-spacing:0.014px;width:102.5px;overflow:hidden;">Исправен (Логический диск)</span>
<div style="left:664px;top:501px;width:1px;height:87px;background:#a0a0a0;"></div>
<div style="left:666px;top:501px;width:116px;height:13px;background:#0000ff;"></div>
<div style="left:669px;top:517px;width:111px;height:68px;background:#fff;border-left:1px solid #a0a0a0;border-top:1px solid #a0a0a0;box-sizing:border-box;"></div>
<span class="t" id="t73" style="left:679.2px;top:519.5px;font-weight:bold;letter-spacing:-0.282px;">(I:)</span>
<span class="t" id="t74" style="left:673.5px;top:534.5px;letter-spacing:-0.747px;">185,92 ГБ</span>
<span class="t" id="t75" style="left:673.5px;top:550px;letter-spacing:0.014px;width:102.0px;overflow:hidden;">Исправен (Логический диск)</span>
<div style="left:300px;top:691px;width:490px;height:1px;background:#a0a0a0;"></div>
<div style="left:196px;top:714px;width:594px;height:1px;background:#fff;"></div>
<div style="left:196px;top:733px;width:594px;height:1px;background:#808080;"></div>
<div style="left:196px;top:734px;width:595px;height:2px;background:#fff;"></div>
<div style="left:788px;top:715px;width:1px;height:19px;background:#a0a0a0;"></div>
<div style="left:789px;top:715px;width:1px;height:19px;background:#fff;"></div>
<div style="left:202px;top:718px;width:10px;height:12px;background:#000;outline:1px solid #fff;"></div>
<span class="t" id="t76" style="left:217.7px;top:716px;letter-spacing:-0.277px;">Не распределена</span>
<div style="left:318px;top:718px;width:10px;height:12px;background:#000080;outline:1px solid #fff;"></div>
<span class="t" id="t77" style="left:333.6px;top:716px;letter-spacing:-0.165px;">Основной раздел</span>
<div style="left:435px;top:718px;width:10px;height:12px;background:#008000;outline:1px solid #fff;"></div>
<span class="t" id="t78" style="left:450.1px;top:716px;letter-spacing:-0.043px;">Дополнительный раздел</span>
<div style="left:593px;top:718px;width:10px;height:12px;background:#00ff00;outline:1px solid #fff;"></div>
<span class="t" id="t79" style="left:608.5px;top:716px;letter-spacing:-0.109px;">Свободно</span>
<div style="left:669px;top:718px;width:10px;height:12px;background:#0000ff;outline:1px solid #fff;"></div>
<span class="t" id="t80" style="left:684.3px;top:716px;letter-spacing:0.120px;">Логический диск</span>
<div style="left:795px;top:83px;width:190px;height:654px;background:#fff;"></div>
<div style="left:983px;top:85px;width:1px;height:650px;background:#e3e3e3;"></div>
<div style="left:797px;top:734px;width:187px;height:1px;background:#e3e3e3;"></div>
<div style="left:795px;top:736px;width:190px;height:1px;background:#d8d8d8;"></div>
<div style="left:795px;top:83px;width:189px;height:1px;background:#a0a0a0;"></div>
<div style="left:795px;top:83px;width:1px;height:653px;background:#a0a0a0;"></div>
<div style="left:796px;top:84px;width:187px;height:1px;background:#696969;"></div>
<div style="left:796px;top:84px;width:1px;height:651px;background:#696969;"></div>
<div style="left:797px;top:85px;width:186px;height:20px;background:#f0f0f0;"></div>
<div style="left:797px;top:85px;width:186px;height:1px;background:#fff;"></div>
<div style="left:797px;top:105px;width:186px;height:1px;background:#808080;"></div>
<span class="t" id="t81" style="left:802.3px;top:87.5px;font-weight:bold;letter-spacing:-0.120px;">Действия</span>
<div style="left:797px;top:107px;width:186px;height:25px;background:linear-gradient(180deg,#bfd5ed 0%,#adc6e4 50%,#98b5da 100%);"></div>
<span class="t" id="t82" style="left:804px;top:112px;letter-spacing:-0.061px;">Управление дисками</span>
<svg style="left:966px;top:117px" width="11" height="6" viewBox="0 0 11 6"><path d="M0.6 5 L5.5 0.1 L10.4 5 Z" fill="#000"/></svg>
<span class="t" id="t83" style="left:828.2px;top:136px;letter-spacing:-0.110px;">Дополнительные дей...</span>
<svg style="left:969.6px;top:138.8px" width="6" height="10" viewBox="0 0 6 10"><path d="M0.2 0 L5.6 4.8 L0.2 9.6 Z" fill="#000"/></svg>
<div style="left:897px;top:739px;width:1px;height:18px;background:#c8c8c8;"></div>
<div style="left:982px;top:739px;width:1px;height:18px;background:#c8c8c8;"></div>
</div></body></html>
